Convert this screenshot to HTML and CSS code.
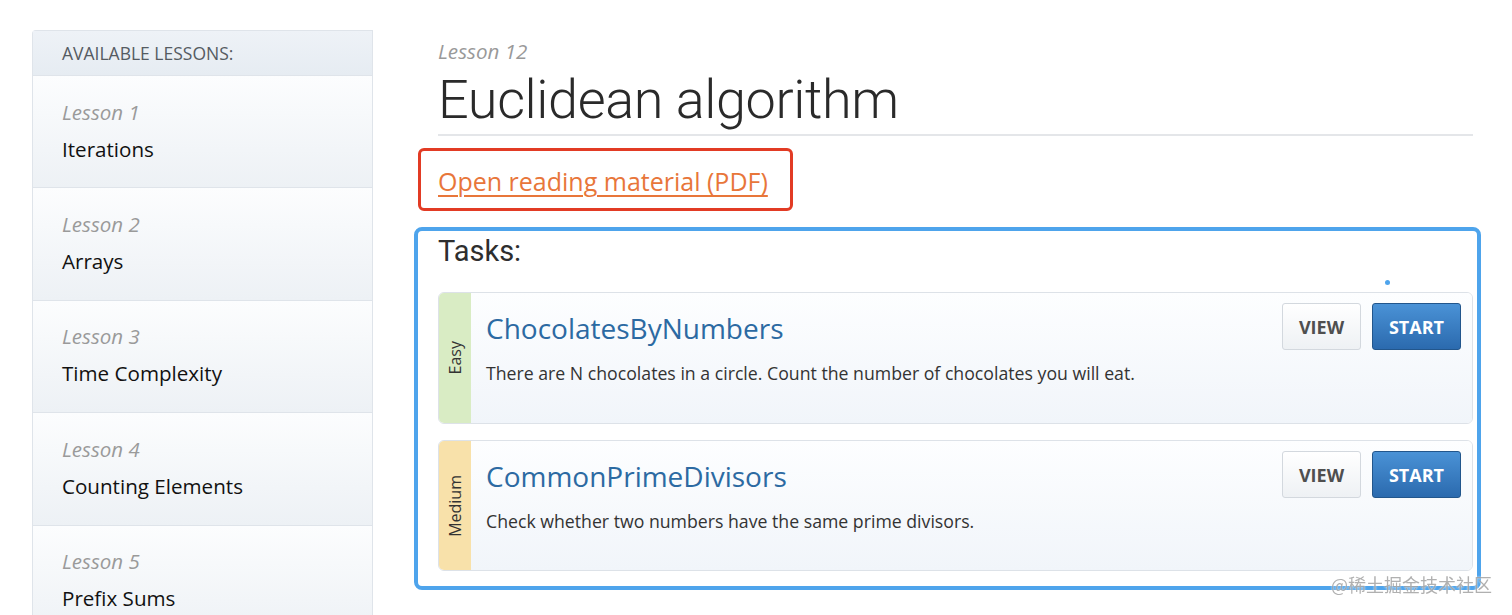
FILE: index.html
```html
<!DOCTYPE html>
<html lang="en">
<head>
<meta charset="utf-8">
<title>Lesson 12 - Euclidean algorithm</title>
<link rel="stylesheet" href="styles.css">
</head>
<body>
<div class="page">
  <aside class="sidebar">
    <div class="sidebar-head">AVAILABLE LESSONS:</div>
    <ul class="lessons">
      <li class="lesson"><span class="lesson-num">Lesson 1</span><span class="lesson-name">Iterations</span></li>
      <li class="lesson"><span class="lesson-num">Lesson 2</span><span class="lesson-name">Arrays</span></li>
      <li class="lesson"><span class="lesson-num">Lesson 3</span><span class="lesson-name">Time Complexity</span></li>
      <li class="lesson"><span class="lesson-num">Lesson 4</span><span class="lesson-name">Counting Elements</span></li>
      <li class="lesson"><span class="lesson-num">Lesson 5</span><span class="lesson-name">Prefix Sums</span></li>
    </ul>
  </aside>
  <main class="main">
    <div class="kicker">Lesson 12</div>
    <h1 class="title">Euclidean algorithm</h1>
    <div class="reading">
      <a class="reading-link" href="#">Open reading material (PDF)</a>
    </div>
    <section class="tasks">
      <span class="dot"></span>
      <h2 class="tasks-title">Tasks:</h2>
      <div class="task">
        <div class="level level-easy"><span>Easy</span></div>
        <div class="task-body">
          <div class="task-text">
            <a class="task-name" href="#">ChocolatesByNumbers</a>
            <p class="task-desc">There are N chocolates in a circle. Count the number of chocolates you will eat.</p>
          </div>
          <div class="task-actions">
            <a class="btn btn-view" href="#">VIEW</a>
            <a class="btn btn-start" href="#">START</a>
          </div>
        </div>
      </div>
      <div class="task">
        <div class="level level-medium"><span>Medium</span></div>
        <div class="task-body">
          <div class="task-text">
            <a class="task-name" href="#">CommonPrimeDivisors</a>
            <p class="task-desc">Check whether two numbers have the same prime divisors.</p>
          </div>
          <div class="task-actions">
            <a class="btn btn-view" href="#">VIEW</a>
            <a class="btn btn-start" href="#">START</a>
          </div>
        </div>
      </div>
    </section>
  </main>
</div>
<div class="watermark">@稀土掘金技术社区</div>
</body>
</html>
```

FILE: styles.css
```css
* { box-sizing: border-box; }
html, body {
  margin: 0;
  padding: 0;
  height: 615px;
  overflow: hidden;
  background: #fff;
  font-family: "Open Sans", "Liberation Sans", sans-serif;
}
.page {
  display: flex;
  align-items: flex-start;
  padding: 30px 0 0 32px;
  gap: 66px;
}
.sidebar {
  width: 341px;
  flex: none;
  border: 1px solid #dfe4ea;
  border-bottom: none;
  border-radius: 4px 0 0 0;
}
.sidebar-head {
  height: 45px;
  display: flex;
  align-items: center;
  padding-left: 29px;
  font-size: 17.5px;
  color: #555b62;
  background: linear-gradient(#eef2f7, #e6ecf2);
  border-bottom: 1px solid #dfe4ea;
}
.lessons {
  list-style: none;
  margin: 0;
  padding: 0;
}
.lesson {
  height: 112.4px;
  display: flex;
  flex-direction: column;
  justify-content: center;
  padding: 0 0 2px 29px;
  background: linear-gradient(#fcfdfe, #edf1f5);
  border-bottom: 1px solid #dfe4ea;
}
.lesson-num {
  font-style: italic;
  font-size: 20.5px;
  color: #9a9a9a;
  line-height: 26px;
  margin-bottom: 10px;
}
.lesson-name {
  font-size: 20.6px;
  color: #111;
  line-height: 28px;
}
.main {
  width: 1035px;
  flex: none;
  margin-left: -1px;
}
.kicker {
  font-style: italic;
  font-size: 20.6px;
  color: #999;
  line-height: 28px;
  margin-top: 7px;
}
.title {
  margin: 0;
  font-family: Roboto, "Liberation Sans", sans-serif;
  font-weight: 300;
  font-size: 54px;
  letter-spacing: -0.4px;
  color: #2a2a2a;
  line-height: 69px;
  border-bottom: 2px solid #e4e6e9;
}
.reading {
  margin: 12px 0 0 -20px;
  width: 375px;
  height: 63px;
  border: 3px solid #e23b24;
  border-radius: 6px;
  display: flex;
  align-items: center;
  padding: 3px 0 0 17px;
}
.reading-link {
  font-size: 25px;
  color: #e8763a;
  text-decoration: underline;
  text-decoration-thickness: 2px;
  text-underline-offset: 4px;
}
.tasks {
  position: relative;
  margin: 16px -8px 0 -24px;
  border: 4px solid #4ea4ec;
  border-radius: 8px;
  padding: 2px 4px 15px 20px;
}
.dot {
  position: absolute;
  left: 967px;
  top: 49px;
  width: 5px;
  height: 5px;
  border-radius: 50%;
  background: #4ea4ec;
}
.tasks-title {
  margin: 0 0 23px;
  font-family: Roboto, "Liberation Sans", sans-serif;
  font-weight: 400;
  font-size: 29px;
  color: #2e2e2e;
  line-height: 36px;
}
.task {
  display: flex;
  height: 132px;
  border: 1px solid #dde2e8;
  border-radius: 6px;
  overflow: hidden;
  margin-bottom: 16px;
}
.task:last-child { margin-bottom: 0; height: 131px; }
.level {
  width: 32px;
  flex: none;
  display: flex;
  align-items: center;
  justify-content: center;
}
.level span {
  writing-mode: vertical-rl;
  transform: rotate(180deg);
  font-size: 16px;
  color: #333;
}
.level-easy { background: #d9ecc4; }
.level-medium { background: #f8e1aa; }
.task-body {
  flex: 1;
  display: flex;
  justify-content: space-between;
  background: linear-gradient(#fdfeff, #f1f5fa);
  padding: 10px 11px 0 15px;
}
.task-text { padding-top: 7px; }
.task-name {
  display: block;
  font-size: 28px;
  color: #2c6aa2;
  text-decoration: none;
  line-height: 36px;
}
.task-desc {
  margin: 15px 0 0;
  font-size: 17.7px;
  color: #333;
  line-height: 24px;
}
.task-actions {
  display: flex;
  gap: 11px;
  align-items: flex-start;
}
.btn {
  display: flex;
  align-items: center;
  justify-content: center;
  height: 47px;
  border-radius: 3px;
  font-weight: 700;
  font-size: 18px;
  text-decoration: none;
}
.btn-view {
  width: 79px;
  color: #4f4f4f;
  background: linear-gradient(#ffffff, #eef1f4);
  border: 1px solid #d3d8de;
}
.btn-start {
  width: 89px;
  color: #fff;
  background: linear-gradient(#4a92d6, #2b6aae);
  border: 1px solid #22568c;
}
.watermark {
  position: fixed;
  right: 20px;
  bottom: 18px;
  font-family: "Noto Sans CJK SC", sans-serif;
  font-size: 18px;
  color: rgba(150, 150, 150, 0.75);
  text-shadow: 0 0 2px #fff;
}
```
